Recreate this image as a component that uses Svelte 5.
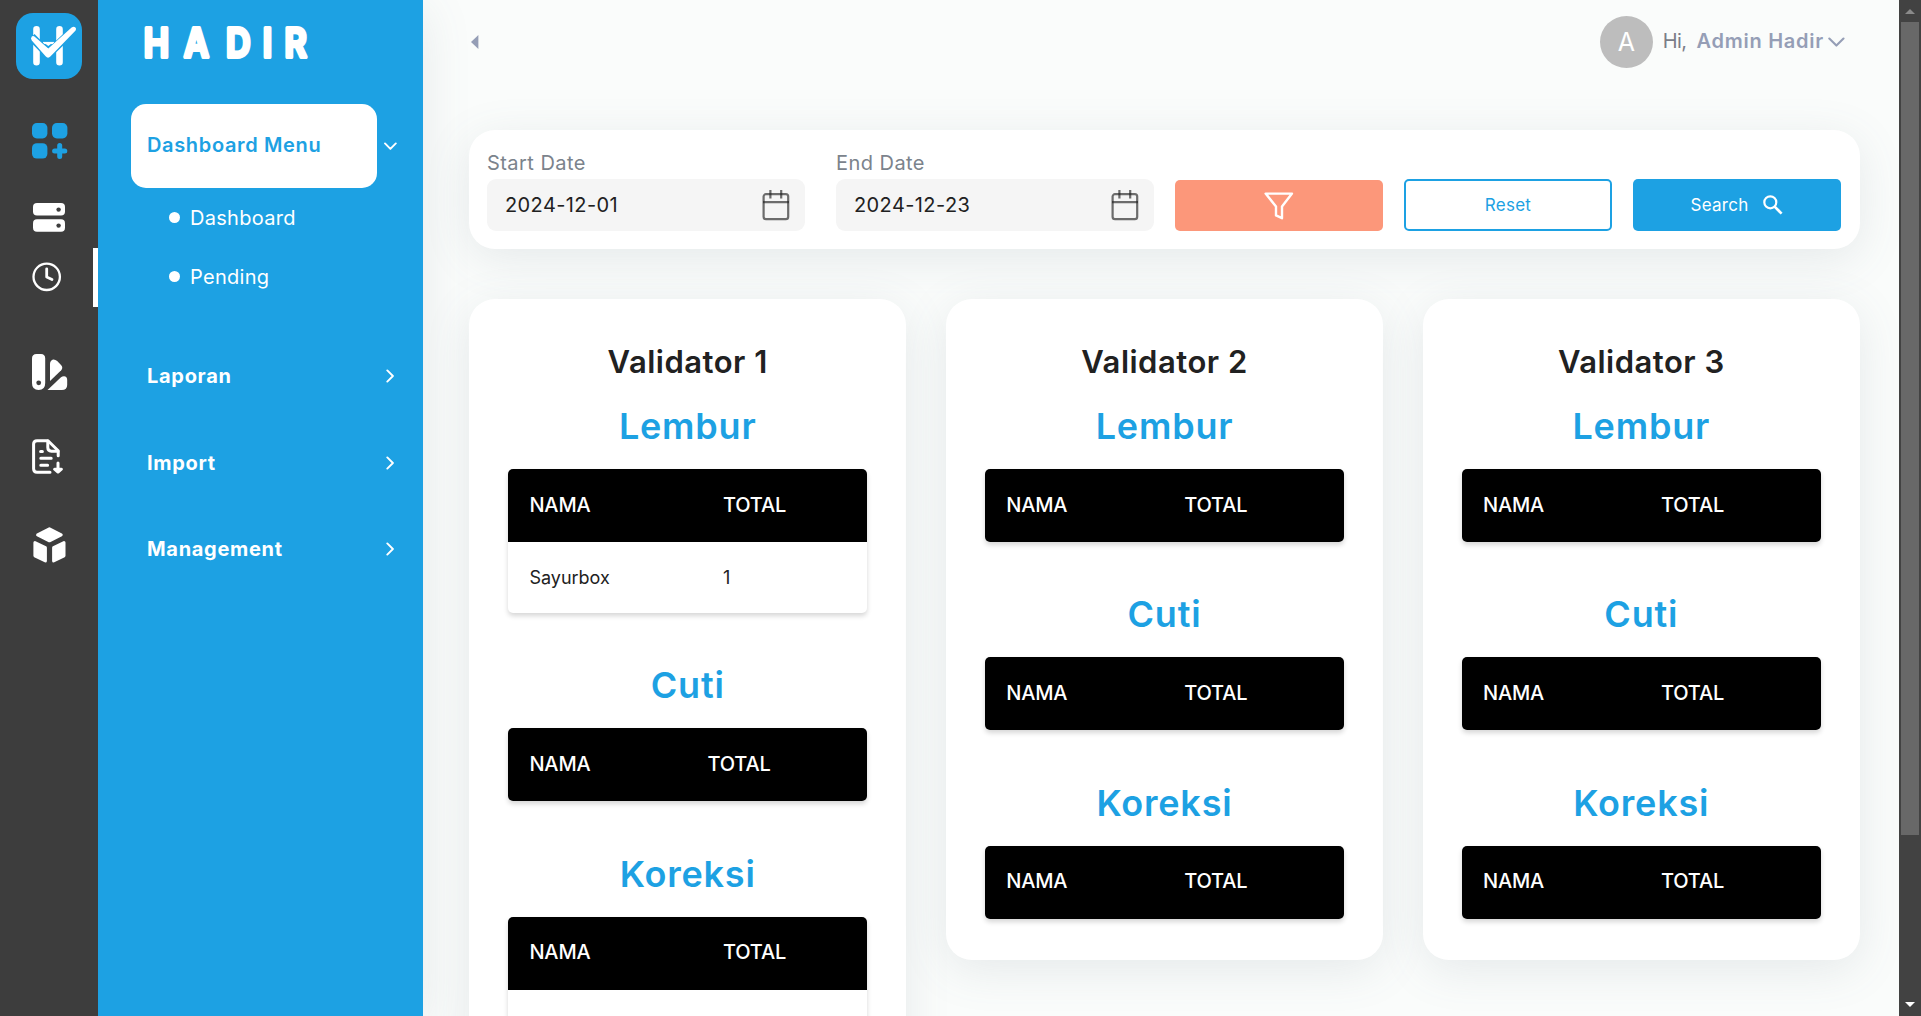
<script>
  const submenu = ['Dashboard', 'Pending'];
  const groups = ['Laporan', 'Import', 'Management'];
  const validators = [
    {
      name: 'Validator 1',
      sections: [
        { title: 'Lembur', rows: [['Sayurbox', '1']] },
        { title: 'Cuti', rows: [] },
        { title: 'Koreksi', rows: [['', '']] }
      ]
    },
    {
      name: 'Validator 2',
      sections: ['Lembur', 'Cuti', 'Koreksi'].map((title) => ({ title, rows: [] }))
    },
    {
      name: 'Validator 3',
      sections: ['Lembur', 'Cuti', 'Koreksi'].map((title) => ({ title, rows: [] }))
    }
  ];
</script>

{#snippet calendar()}
  <svg class="calendar" width="28" height="31" viewBox="0 0 28 31" fill="none" stroke="#222" stroke-opacity=".65" stroke-width="2.2">
    <rect x="1.6" y="4.2" width="24.6" height="25" rx="2.4" />
    <path d="M1 12.2H27M8.4 0V8.4M19.2 0V8.4" />
  </svg>
{/snippet}

<div class="page">
  <aside class="rail">
    <svg class="logo" width="66" height="66" viewBox="0 0 66 66">
      <rect width="66" height="66" rx="17" fill="#1da1e3" />
      <path d="M20.5 16.2V49.3M43.5 16.2V49.3" stroke="#fff" stroke-width="6.6" stroke-linecap="round" />
      <path d="M27 30H38" stroke="#fff" stroke-width="2.2" />
      <path d="M15.5 24L32.2 41L60 14.5" fill="none" stroke="#1da1e3" stroke-width="8.5" />
      <path d="M28.5 30H36L32.3 33Z" fill="#fff" />
      <path d="M15.8 23.4Q14.2 25.2 15.8 27.6L29.6 43.3Q32 46 34.6 43.3L59.6 17.5Q60.8 15.6 59.2 14.2Q57.6 13.2 55.6 14.6L32.3 35.5L19.3 24.2Q17.3 22.4 15.8 23.4Z" fill="#fff" />
    </svg>
    <svg class="i-grid" width="36" height="36" viewBox="0 0 36 36" fill="#1da1e3">
      <rect width="15.4" height="15.4" rx="4.8" /><rect x="20" width="15.4" height="15.4" rx="4.8" />
      <rect y="20.2" width="15.4" height="15.4" rx="4.8" />
      <path d="M27.7 22.5V33.5M22.6 28H32.8" stroke="#1da1e3" stroke-width="5" stroke-linecap="round" />
    </svg>
    <svg class="i-server" width="32" height="29" viewBox="0 0 32 29" fill="#fff">
      <rect width="32" height="12.6" rx="4" /><rect y="16.2" width="32" height="12.6" rx="4" />
      <circle cx="25.6" cy="6.6" r="2.2" fill="#3d3d3d" /><circle cx="25.6" cy="22.6" r="2.2" fill="#3d3d3d" />
    </svg>
    <div class="active">
      <svg width="30" height="30" viewBox="0 0 30 30" fill="none" stroke="#fff" stroke-width="2.3" stroke-linecap="round" stroke-linejoin="round">
        <circle cx="14.7" cy="14.8" r="13.2" /><path d="M14.7 6.8V15L20 17.5" stroke-width="2.8" />
      </svg>
    </div>
    <svg class="i-palette" width="36" height="36" viewBox="0 0 36 36" fill="#fff">
      <path d="M4.5 0H9Q13.2 0 13.2 4.5V29Q13.2 36 6.6 36Q0 36 0 29V4.5Q0 0 4.5 0Z" />
      <circle cx="6.7" cy="28.8" r="2.4" fill="#3d3d3d" />
      <path d="M18 27V10Q18 6.4 21 5.4Q23.4 5.2 25.2 7L29 11Q31.4 13.6 29.2 16.2Z" />
      <path d="M15.5 36L29 23.2Q30.2 22.3 32 22.3Q35.2 22.6 35.2 26V30.8Q35.2 36 29.8 36Z" />
    </svg>
    <svg class="i-doc" width="32" height="36" viewBox="0 0 32 36" fill="none" stroke="#fff" stroke-width="3" stroke-linecap="round" stroke-linejoin="round">
      <path d="M18 33.2H5Q1.6 33.2 1.6 29.8V5Q1.6 1.7 5 1.7H16L26.2 11.8V16.8" />
      <path d="M15.8 2V8.6Q15.8 12.2 19.4 12.2H26M8.6 12.5H10.4M8.8 19.2H19.2M8.8 26.2H15.6M26 24V32" />
      <path d="M22.6 30.2L26 33L29.4 30.2Z" fill="#fff" />
    </svg>
    <svg class="i-cube" width="33" height="36" viewBox="0 0 33 36" fill="#fff" stroke="#fff" stroke-width="3" stroke-linejoin="round">
      <path d="M16.4 1.8L28.2 7.9L16.4 13.8L4.6 7.9ZM1.9 15.6L12.4 20.7V34L1.9 28.8ZM31 15.6L20.6 20.7V34L31 28.8Z" />
    </svg>
  </aside>

  <nav class="menu">
    <svg class="brand" width="180" height="44" viewBox="0 0 180 44">
      <text y="36.3" x="20.6 67.6 116.9 151.2 184.1" transform="scale(.85 1)">HADIR</text>
    </svg>
    <div class="current">
      <span class="pill">Dashboard Menu</span>
      <svg width="13" height="9" viewBox="0 0 13 9" fill="none" stroke="#fff" stroke-width="1.9" stroke-linecap="round" stroke-linejoin="round"><path d="M1 1.4L6.4 6.9L11.8 1.4" /></svg>
    </div>
    <ul class="sub">
      {#each submenu as item}<li>{item}</li>{/each}
    </ul>
    <div class="groups">
      {#each groups as item}
        <div class="group">
          <span>{item}</span>
          <svg width="9" height="14" viewBox="0 0 9 14" fill="none" stroke="#fff" stroke-width="1.9" stroke-linecap="round" stroke-linejoin="round"><path d="M1.3 1.4L6.9 7L1.3 12.6" /></svg>
        </div>
      {/each}
    </div>
  </nav>

  <main>
    <header>
      <svg width="8" height="14" viewBox="0 0 8 14" fill="#959eb6"><path d="M0 7L7.4 0V14Z" /></svg>
      <div class="user">
        <span class="avatar">A</span>
        <span class="hi">Hi,</span>
        <b>Admin Hadir</b>
        <svg width="17" height="11" viewBox="0 0 17 11" fill="none" stroke="#959eb6" stroke-width="2.1" stroke-linecap="round" stroke-linejoin="round"><path d="M1.3 1.5L8.4 8.6L15.5 1.5" /></svg>
      </div>
    </header>

    <section class="filters">
      <div class="field">
        <span class="label">Start Date</span>
        <div class="date">2024-12-01 {@render calendar()}</div>
      </div>
      <div class="field end">
        <span class="label">End Date</span>
        <div class="date">2024-12-23 {@render calendar()}</div>
      </div>
      <button class="btn filter" aria-label="Filter">
        <svg width="30" height="28" viewBox="0 0 30 28" fill="none" stroke="#fff" stroke-width="2.4" stroke-linejoin="round"><path d="M1.6 1.6H28L18 14.4V26.2L12 23.4V14.4Z" /></svg>
      </button>
      <button class="btn reset">Reset</button>
      <button class="btn search">Search
        <svg width="20" height="20" viewBox="0 0 20 20" fill="none" stroke="#fff" stroke-width="2.2"><circle cx="7.3" cy="7.3" r="6" /><path d="M11.6 11.6L18.6 18.6" stroke-width="2.7" /></svg>
      </button>
    </section>

    <div class="cards">
      {#each validators as v}
        <article>
          <h2>{v.name}</h2>
          {#each v.sections as s}
            <h3>{s.title}</h3>
            <div class="table" class:filled={s.rows.length}>
              <div class="row head"><span>NAMA</span><span>TOTAL</span></div>
              {#each s.rows as r}
                <div class="row"><span>{r[0]}</span><span>{r[1]}</span></div>
              {/each}
            </div>
          {/each}
        </article>
      {/each}
    </div>
  </main>

  <div class="scrollbar">
    <svg width="22" height="22" viewBox="0 0 22 22"><path d="M6 14L11 9L16 14Z" fill="#8a8a8a" /></svg>
    <div class="thumb"></div>
    <svg class="down" width="22" height="22" viewBox="0 0 22 22"><path d="M6 8L11 13L16 8Z" fill="#fff" /></svg>
  </div>
</div>

<style>
  :global(body) { margin: 0; overflow: hidden; }
  .page {
    display: flex;
    height: 1016px;
    overflow: hidden;
    background: #fafcfb;
    font-family: Inter, "Open Sans", sans-serif;
    font-size: 19px;
    color: #212121;
  }
  svg { display: block; flex: none; }

  .rail { width: 98px; flex: none; background: #3d3d3d; display: flex; flex-direction: column; z-index: 2; }
  .logo { margin: 13px 0 0 16px; }
  .i-grid { margin: 44px 0 0 32px; }
  .i-server { margin: 44px 0 0 33px; }
  .active { margin-top: 16px; height: 59px; box-sizing: border-box; border-right: 5px solid #fff; padding: 14px 0 0 32px; }
  .i-palette { margin: 47px 0 0 32px; }
  .i-doc { margin: 49px 0 0 32px; }
  .i-cube { margin: 52px 0 0 33px; }

  .menu {
    width: 325px;
    flex: none;
    box-sizing: border-box;
    background: #1da1e3;
    color: #fff;
    padding: 21px 0 0 33px;
    box-shadow: 0 10px 46px rgba(90, 110, 125, .13);
    z-index: 1;
  }
  .brand { margin-left: 8px; overflow: visible; }
  .brand text {
    font-size: 40px;
    font-weight: 600;
    fill: #fff;
    stroke: #fff;
    stroke-width: 4px;
    stroke-linejoin: round;
    text-anchor: middle;
  }
  .current { display: flex; align-items: center; gap: 7px; margin-top: 39px; }
  .pill {
    width: 246px;
    height: 84px;
    line-height: 82px;
    box-sizing: border-box;
    padding-left: 16px;
    border-radius: 15px;
    background: #fff;
    color: #1da1e3;
    font-weight: 600;
    font-size: 20px;
    letter-spacing: .65px;
  }
  .sub { list-style: none; margin: 0; padding: 0 0 0 38px; font-size: 20px; letter-spacing: .3px; }
  .sub li { display: flex; align-items: center; gap: 10px; height: 59px; }
  .sub li::before { content: ""; width: 11px; height: 11px; border-radius: 50%; background: #fff; }
  .groups { margin-top: 27px; }
  .group { display: flex; align-items: center; justify-content: space-between; height: 86.5px; padding: 0 28px 0 16px; font-weight: 700; font-size: 20px; letter-spacing: .7px; }

  main { flex: 1; padding: 0 39px 0 46px; }
  header { display: flex; align-items: center; justify-content: space-between; height: 84px; padding-left: 2px; }
  .user { display: flex; align-items: center; padding-right: 15px; font-size: 20px; }
  .avatar { width: 53px; height: 52px; border-radius: 50%; background: #bdbdbd; color: #fff; font-size: 25px; line-height: 52px; text-align: center; }
  .hi { margin-left: 10px; padding-bottom: 2px; color: #7a7d88; letter-spacing: -.6px; }
  .user b { margin: 0 4px 0 10px; padding-bottom: 2px; color: #959eb6; font-weight: 600; letter-spacing: .75px; }

  .filters {
    display: flex;
    align-items: flex-end;
    height: 119px;
    box-sizing: border-box;
    margin-top: 46px;
    padding: 0 19px 18px 18px;
    border-radius: 26px;
    background: #fff;
    box-shadow: 0 10px 46px rgba(90, 110, 125, .13);
  }
  .field { width: 318px; margin-right: 31px; }
  .end { margin-right: 21px; }
  .label { display: block; height: 32px; line-height: 32px; color: #7b838c; font-size: 20px; letter-spacing: .45px; }
  .date {
    display: flex;
    align-items: center;
    justify-content: space-between;
    height: 52px;
    box-sizing: border-box;
    padding: 0 15px 0 18px;
    border-radius: 9px;
    background: #f5f5f5;
    font-size: 20px;
    letter-spacing: .4px;
  }
  .btn {
    display: flex;
    align-items: center;
    justify-content: center;
    gap: 15px;
    width: 208px;
    height: 52px;
    padding: 0;
    margin-right: 21px;
    border: 0;
    border-radius: 5px;
    font: 400 17px Inter, sans-serif;
    letter-spacing: .25px;
  }
  .filter { height: 51px; background: #fc977a; }
  .reset { background: #fff; border: 2px solid #1da1e3; color: #1da1e3; }
  .search { margin-right: 0; background: #1da1e3; color: #fff; }

  .cards { display: grid; grid-template-columns: repeat(3, 1fr); gap: 39.4px; align-items: start; margin-top: 50px; }
  article { box-sizing: border-box; padding: 39px 39.4px 41.4px; border-radius: 26px; background: #fff; box-shadow: 0 10px 46px rgba(90, 110, 125, .13); }
  h2 { margin: 0; height: 48px; line-height: 48px; text-align: center; font-size: 31px; font-weight: 600; letter-spacing: .5px; }
  h3 { margin: 19px 0 21px; height: 43px; line-height: 43px; text-align: center; color: #1da1e3; font-size: 36px; font-weight: 600; letter-spacing: .8px; }
  .table { border-radius: 5px; overflow: hidden; box-shadow: 0 3px 5px rgba(0, 0, 0, .16); }
  .table + h3 { margin-top: 51.3px; }
  .row { display: grid; grid-template-columns: 178px 1fr; align-items: center; height: 71px; box-sizing: border-box; padding: 0 21px 1px; font-size: 18px; }
  .filled .row { grid-template-columns: 193.5px 1fr; }
  .head { height: 73px; padding-bottom: 2px; background: #000; color: #fff; font-size: 20px; font-weight: 500; letter-spacing: -.15px; }

  .scrollbar { display: flex; flex-direction: column; align-items: center; width: 22px; flex: none; background: #424242; z-index: 2; }
  .thumb { width: 18px; height: 813px; background: #686868; }
  .down { margin-top: auto; }
</style>
